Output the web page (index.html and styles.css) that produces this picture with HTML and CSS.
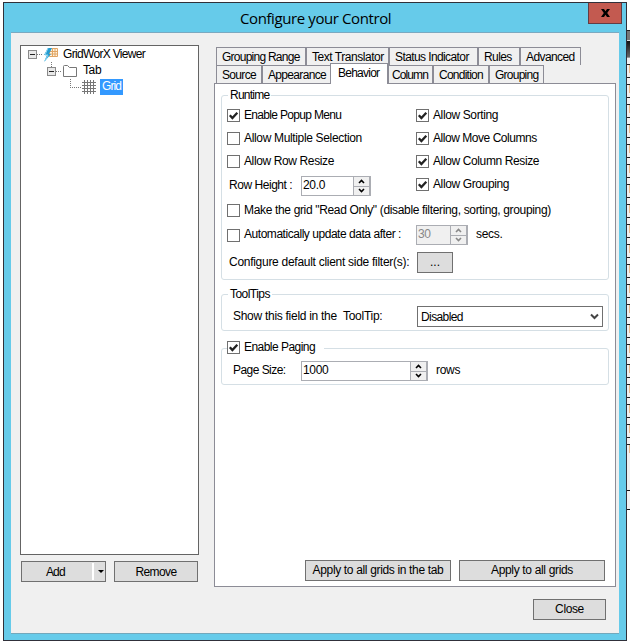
FILE: index.html
```html
<!DOCTYPE html>
<html lang="en">
<head>
<meta charset="utf-8">
<title>Configure your Control</title>
<link rel="stylesheet" href="styles.css">
</head>
<body>
<svg width="0" height="0" class="defs">
  <symbol id="tick" viewBox="0 0 11 11"><path d="M1.800 5.200L4.400 8L9.300 2.700" fill="none" stroke="#222" stroke-width="2.300"/></symbol>
  <symbol id="up" viewBox="0 0 7 5"><path d="M1 4L3.500 1.500L6 4" fill="none" stroke="currentColor" stroke-width="1.600"/></symbol>
  <symbol id="down" viewBox="0 0 7 5"><path d="M1 1L3.500 3.500L6 1" fill="none" stroke="currentColor" stroke-width="1.600"/></symbol>
</svg>
<div class="desktop">
<div class="window">
  <header class="titlebar"><h1>Configure your Control</h1><button class="x" aria-label="Close window"><svg width="9" height="8" viewBox="0 0 9 8"><path d="M0 0H3L4.500 2.300L6 0H9L6.200 4L9 8H6L4.500 5.700L3 8H0L2.800 4Z"/></svg></button></header>
  <main class="client">
    <aside class="side">
      <div class="tree">
        <div class="node root"><i class="minus"></i><i class="dots"></i>
          <svg width="16" height="16" viewBox="0 0 16 16"><path d="M5.500 1.500H13.500V9.500H5.500ZM5.500 4.500H13.500M5.500 7H13.500M8.500 1.500V9.500M11 1.500V9.500" fill="#fff3df" stroke="#e0a565"/><path d="M4 1L0 8H3L0 15L7 7H5L8 1Z" fill="#249bd0"/><path d="M4 1L1 8H4L1 14" fill="none" stroke="#8bd6f2"/></svg>
          <span class="t-root">GridWorX Viewer</span></div>
        <div class="node tab"><i class="minus"></i><i class="dots"></i>
          <svg width="14" height="12" viewBox="0 0 14 12"><path d="M.5 1.500Q.5.5 1.500.5H4.500L6.500 2.500H13.500V11.500H.5Z" fill="#fff" stroke="#777"/></svg><span class="t-tab">Tab</span></div>
        <div class="node leaf"><i class="elbow"></i>
          <svg width="14" height="14" viewBox="0 0 14 14"><path d="M2.500 0V14M5.500 0V14M8.500 0V14M11.500 0V14M0 2.500H14M0 5.500H14M0 8.500H14M0 11.500H14" stroke="#777"/></svg><span class="sel t-grid">Grid</span></div>
      </div>
      <div class="side-buttons">
        <button class="btn add"><span class="t-add">Add</span><i class="split"></i></button>
        <button class="btn remove"><span class="t-remove">Remove</span></button>
      </div>
    </aside>
    <section class="right">
      <nav class="tabs upper">
        <span class="tabitem w90"><b class="t-gr">Grouping Range</b></span><span class="tabitem w83"><b class="t-tt">Text Translator</b></span><span class="tabitem w89"><b class="t-si">Status Indicator</b></span><span class="tabitem w42"><b class="t-ru">Rules</b></span><span class="tabitem w61"><b class="t-ad">Advanced</b></span>
      </nav>
      <nav class="tabs lower">
        <span class="tabitem w46"><b class="t-so">Source</b></span><span class="tabitem w68"><b class="t-ap">Appearance</b></span><span class="tabitem active"><b class="t-be">Behavior</b></span><span class="tabitem w45"><b class="t-co">Column</b></span><span class="tabitem w56"><b class="t-cn">Condition</b></span><span class="tabitem w55"><b class="t-gp">Grouping</b></span>
      </nav>
      <div class="panel">
        <fieldset class="group runtime">
          <legend><span class="t-rt">Runtime</span></legend>
          <div class="options">
            <div class="column">
              <label class="check"><i class="box"><svg><use href="#tick"/></svg></i><span class="t-epm">Enable Popup Menu</span></label>
              <label class="check"><i class="box"></i><span class="t-ams">Allow Multiple Selection</span></label>
              <label class="check"><i class="box"></i><span class="t-arr">Allow Row Resize</span></label>
              <div class="field height"><span class="t-rh">Row Height :</span><div class="spin"><span class="t-20">20.0</span><div class="arrows"><i><svg><use href="#up"/></svg></i><i><svg><use href="#down"/></svg></i></div></div></div>
            </div>
            <div class="column">
              <label class="check"><i class="box"><svg><use href="#tick"/></svg></i><span class="t-as">Allow Sorting</span></label>
              <label class="check"><i class="box"><svg><use href="#tick"/></svg></i><span class="t-amc">Allow Move Columns</span></label>
              <label class="check"><i class="box"><svg><use href="#tick"/></svg></i><span class="t-acr">Allow Column Resize</span></label>
              <label class="check"><i class="box"><svg><use href="#tick"/></svg></i><span class="t-ag">Allow Grouping</span></label>
            </div>
          </div>
          <label class="check readonly"><i class="box"></i><span class="t-ro">Make the grid "Read Only" (disable filtering, sorting, grouping)</span></label>
          <div class="auto"><label class="check"><i class="box"></i><span class="t-au">Automatically update data after :</span></label><div class="spin off"><span class="t-30">30</span><div class="arrows"><i><svg><use href="#up"/></svg></i><i><svg><use href="#down"/></svg></i></div></div><span class="t-secs">secs.</span></div>
          <div class="filter"><span class="t-cf">Configure default client side filter(s):</span><button class="btn more"><span>...</span></button></div>
        </fieldset>
        <fieldset class="group tips">
          <legend><span class="t-tl">ToolTips</span></legend>
          <div class="tiprow"><span class="t-sh">Show this field in the &nbsp;ToolTip:</span><div class="combo"><span class="t-di">Disabled</span><svg width="9" height="7" viewBox="0 0 9 7"><path d="M1 1.500L4.500 5L8 1.500" fill="none" stroke="#444" stroke-width="2"/></svg></div></div>
        </fieldset>
        <fieldset class="group paging">
          <legend><label class="check"><i class="box"><svg><use href="#tick"/></svg></i><span class="t-ep">Enable Paging</span></label></legend>
          <div class="pagerow"><span class="t-ps">Page Size:</span><div class="spin"><span class="t-1000">1000</span><div class="arrows"><i><svg><use href="#up"/></svg></i><i><svg><use href="#down"/></svg></i></div></div><span class="t-rows">rows</span></div>
        </fieldset>
        <div class="apply"><button class="btn"><span class="t-a1">Apply to all grids in the tab</span></button><button class="btn"><span class="t-a2">Apply to all grids</span></button></div>
      </div>
      <button class="btn close"><span class="t-cl">Close</span></button>
    </section>
  </main>
</div>
<div class="behind"><div class="head"></div><div class="subhead"></div><div class="cells"></div><div class="foot"></div></div>
</div>
</body>
</html>
```
FILE: styles.css
```css
* { box-sizing: border-box; }
body { margin: 0; background: #fff; font: 12px/14px "Liberation Sans", Arial, sans-serif; color: #000; overflow: hidden; }
.defs { display: block; }
i { font-style: normal; display: block; }
b { font-weight: normal; }
span, b { white-space: nowrap; padding-bottom: 2px; }
button { font: inherit; color: inherit; padding: 0; }
svg { display: block; flex: none; }
.desktop { display: flex; width: 630px; height: 643px; padding: 2px 0 0 3px; }

.window { width: 624px; height: 639px; flex: none; background: #66cbea; border: 1px solid #30303a; padding: 0 7px 7px; }
.titlebar { height: 29px; display: flex; justify-content: flex-end; margin-right: -3px; }
.titlebar h1 { margin: 4px 0 0; width: 348px; font: 15px/22px "Open Sans", sans-serif; letter-spacing: -.4px; white-space: nowrap; }
.x { width: 34px; height: 21px; border: 1px solid #633b43; border-top: 0; background: #c35a50; display: flex; align-items: center; justify-content: center; }
.client { height: 602px; width: 608px; background: #f0f0f0; border-top: 1px solid #7ba9c0; border-bottom: 1px solid #72a8bc; display: flex; padding-left: 9px; }

.side { width: 194px; padding-top: 12px; }
.tree { width: 179px; height: 510px; border: 1px solid #646464; background: #fff; }
.node { display: flex; align-items: center; height: 16px; }
.minus { width: 9px; height: 9px; border: 1px solid #8a8a8a; background: linear-gradient(#222, #222) center / 5px 1px no-repeat #e8e8e8; }
.dots { width: 6px; height: 1px; background: repeating-linear-gradient(90deg, #777 0 1px, transparent 1px 2px); }
.root { padding-left: 7px; height: 17px; background: repeating-linear-gradient(#777 0 1px, transparent 1px 2px) 30px 16px / 1px 1px no-repeat; }
.root svg { margin: 0 3px 0 1px; }
.tab { padding-left: 26px; background: repeating-linear-gradient(transparent 0 1px, #777 1px 2px) 30px 0 / 1px 4px no-repeat; }
.tab svg { margin: 0 6px 0 1px; }
.leaf { padding-left: 49px; }
.leaf svg { margin: 0 4px 0 1px; }
.elbow { width: 11px; height: 9px; margin-top: -7px; background: repeating-linear-gradient(#777 0 1px, transparent 1px 2px) 0 0 / 1px 9px no-repeat, repeating-linear-gradient(90deg, #777 0 1px, transparent 1px 2px) 0 8px / 11px 1px no-repeat; }
.sel { background: #3399ff; color: #fff; line-height: 15px; height: 16px; padding: 0 2px; width: 23px; }
.side-buttons { display: flex; gap: 8px; padding: 6px 0 0 1px; }

.btn { height: 21px; background: #ddd; border: 1px solid #707070; display: flex; align-items: center; justify-content: center; }
.add { width: 85px; justify-content: flex-start; padding-left: 24px; }
.add span, .remove span { padding-bottom: 0; }
.remove { width: 84px; }
.split { margin-left: auto; width: 13px; height: 17px; border-left: 2px solid #fff; display: flex; align-items: center; justify-content: center; }
.split::after { content: ""; border: 3px solid transparent; border-top-color: #000; border-bottom: 0; margin-left: 2px; }

.right { width: 405px; padding-top: 14px; }
.tabs { display: flex; height: 18px; padding-left: 2px; }
.tabitem { height: 18px; border: 1px solid #8c8c96; border-bottom: 0; background: #f0f0f0; display: flex; align-items: center; padding: 2px 0 0 5px; }
.w90 { width: 90px; } .w83 { width: 83px; } .w89 { width: 89px; } .w42 { width: 42px; } .w61 { width: 61px; }
.w46 { width: 46px; } .w68 { width: 69px; } .w45 { width: 45px; padding-left: 3px; } .w56 { width: 56px; } .w55 { width: 55px; }
.active { width: 58px; height: 21px; margin: -2px 0 0 -1px; background: #fff; z-index: 1; padding: 0 0 0 7px; }
.panel { width: 402px; height: 504px; border: 1px solid #8c8c96; background: #fff; padding: 4px 6px 5px; display: flex; flex-direction: column; }
.group { margin: 0; padding: 0 0 0 5px; border: 1px solid #d5dfe5; border-radius: 3px; width: 388px; min-width: 0; flex: none; }
legend { height: 14px; padding: 0 2px; margin-left: 1px; }
.check { display: flex; align-items: center; height: 13px; gap: 4px; }
.box { width: 13px; height: 13px; border: 1px solid #707070; background: #fff; flex: none; }
.box svg { width: 11px; height: 11px; }

.runtime { height: 192px; }
.options { display: flex; height: 102px; padding-top: 7px; }
.column { width: 189px; display: flex; flex-direction: column; gap: 10px; }
.height { display: flex; align-items: center; justify-content: space-between; width: 142px; height: 20px; margin: -2px 0 0 2px; flex: none; }
.spin { height: 20px; width: 70px; border: 1px solid #abadb3; background: #fff; display: flex; align-items: center; justify-content: space-between; padding-left: 1px; flex: none; }
.arrows { width: 17px; height: 18px; display: flex; flex-direction: column; border: 1px solid #abadb3; border-width: 0 1px 0 1px; background: #abadb3; gap: 1px; }
.arrows i { height: 9px; flex: 1; background: #f0f0f0; display: flex; align-items: center; justify-content: center; }
.arrows svg { width: 7px; height: 5px; }
.auto { display: flex; align-items: center; height: 20px; margin-top: 8px; }
.auto .check { width: 189px; }
.off { width: 52px; background: #f0f0f0; color: #888; margin-right: 8px; }
.filter { display: flex; align-items: center; margin-top: 7px; padding-left: 2px; justify-content: space-between; width: 226px; }
.more { width: 36px; flex: none; }

.tips { height: 44px; margin-top: 7px; }
.tiprow { display: flex; align-items: center; justify-content: space-between; padding-left: 6px; width: 376px; margin-top: 5px; }
.combo { width: 186px; height: 21px; border: 1px solid #707070; display: flex; align-items: center; justify-content: space-between; padding: 0 3px; }
.combo span { padding-bottom: 0; }
.paging { height: 44px; margin-top: 10px; }
.paging legend { padding: 0 9px 0 0; margin-left: 0; }
.pagerow { display: flex; align-items: center; padding-left: 6px; margin-top: 6px; }
.pagerow .spin { width: 127px; margin-right: 8px; }
.pagerow > .t-ps { width: 68px; }
.apply { display: flex; gap: 8px; justify-content: flex-end; margin: auto 4px 0 0; }
.apply .btn { width: 146px; }
.close { width: 73px; margin: 12px 0 0 319px; }

/* label tracking */
.t-root, .t-epm, .t-so, .t-ap { letter-spacing: -.67px; }
.t-gr, .t-be, .t-cn, .t-gp, .t-rt { letter-spacing: -.75px; }
.t-co, .t-grid, .t-add { letter-spacing: -.9px; }
.t-remove, .t-ru, .t-ad, .t-si, .t-di { letter-spacing: -.6px; }
.t-ep, .t-ps, .t-tl { letter-spacing: -.54px; }
.t-tt, .t-rh, .t-amc, .t-au { letter-spacing: -.46px; }
.t-arr, .t-as, .t-acr, .t-ag, .t-cl, .t-tab { letter-spacing: -.38px; }
.t-ams, .t-ro, .t-a1, .t-a2 { letter-spacing: -.34px; }
.t-cf, .t-sh { letter-spacing: -.28px; }
.t-20, .t-1000, .t-30, .t-rows, .t-secs { letter-spacing: -.3px; }

.behind { width: 3px; flex: none; padding-top: 28px; }
.head { height: 11px; background: linear-gradient(#222 0 1px, #777 1px 10px, #ddd 10px); }
.subhead { height: 17px; background: linear-gradient(#111, #666); border-bottom: 1px solid #999; }
.cells { height: 399px; background: repeating-linear-gradient(transparent 0 7px, #e9b98a 7px 15px, transparent 15px 20px) 2px 0 / 1px 100% no-repeat, repeating-linear-gradient(#f0f0f0 0 6px, #222 6px 7px, #f0f0f0 7px 19px, #222 19px 20px); }
.foot { height: 53px; background: linear-gradient(#f0f0f0 0 33px, #111 33px 34px, #f0f0f0 34px 52px, #111 52px); }
```
